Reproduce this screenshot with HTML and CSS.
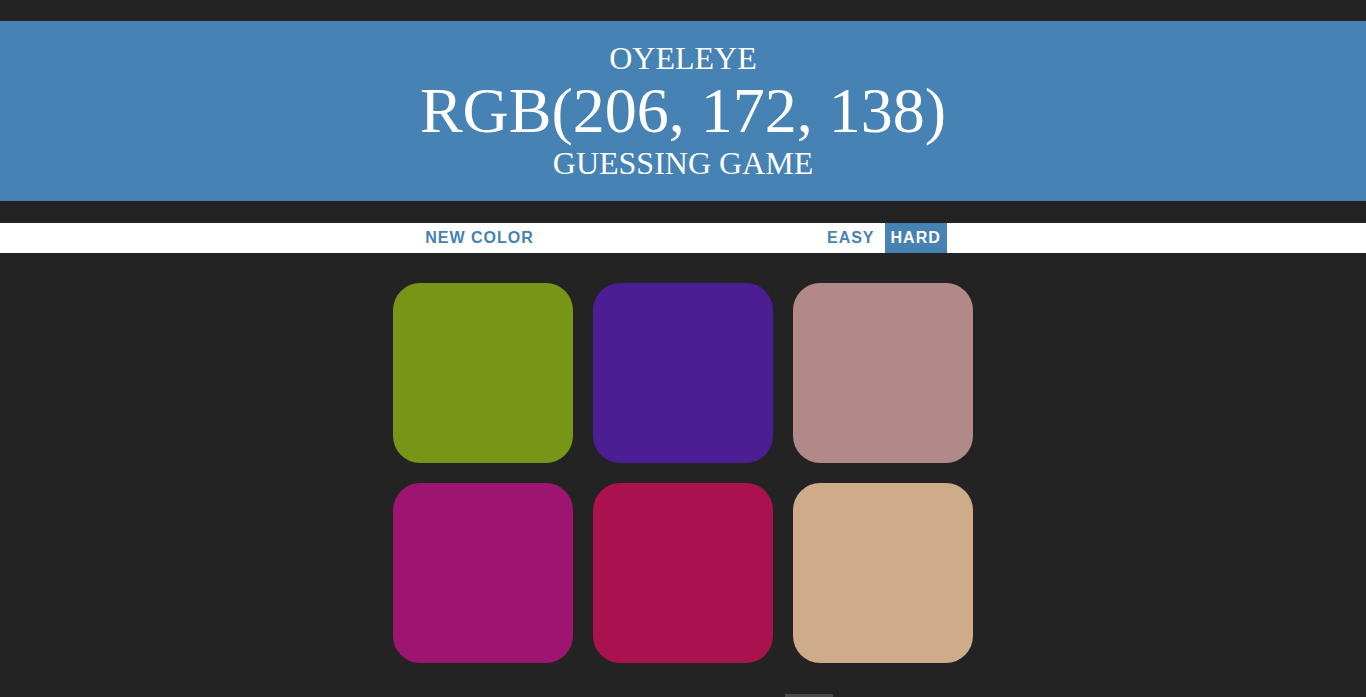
FILE: index.html
```html
<!DOCTYPE html>
<html>
<head>
<meta charset="utf-8">
<title>Colour Game</title>
<link rel="stylesheet" href="styles.css">
</head>
<body>
<h1 class="title">
  <span class="line">OYELEYE</span>
  <span class="line big">RGB(206, 172, 138)</span>
  <span class="line">GUESSING GAME</span>
</h1>
<div class="stripe">
  <button class="btn">NEW COLOR</button>
  <span class="message"></span>
  <button class="btn mode">EASY</button>
  <button class="btn mode selected">HARD</button>
</div>
<div class="container">
  <div class="square sq1"></div>
  <div class="square sq2"></div>
  <div class="square sq3"></div>
  <div class="square sq4"></div>
  <div class="square sq5"></div>
  <div class="square sq6"></div>
</div>
<div class="footer-bar"></div>
</body>
</html>
```
FILE: styles.css
```css
html, body {
  margin: 0;
  padding: 0;
}
body {
  background: #232323;
  font-family: "Liberation Sans", Arial, sans-serif;
  overflow: hidden;
}
.title {
  margin: 21px 0 22px;
  padding: 20px 0;
  background: #4682b4;
  color: #fff;
  text-align: center;
  font-family: "Liberation Serif", "Times New Roman", serif;
  font-weight: normal;
  font-size: 32px;
  line-height: 35px;
  text-transform: uppercase;
}
.line {
  display: block;
}
.big {
  font-size: 64px;
  line-height: 70px;
}
.stripe {
  background: #fff;
  height: 30px;
  display: flex;
  justify-content: center;
  align-items: stretch;
  gap: 4px;
}
.btn {
  border: none;
  background: none;
  color: #4682b4;
  font-family: "Liberation Sans", Arial, sans-serif;
  font-weight: 700;
  font-size: 16px;
  letter-spacing: 1px;
  text-transform: uppercase;
  padding: 0 6px 1px;
  margin: 0;
  height: 30px;
  line-height: 28px;
}
.btn.selected {
  background: #4682b4;
  color: #fff;
}
.message {
  width: 20%;
}
.container {
  width: 600px;
  margin: 20px auto 0;
  display: flex;
  flex-wrap: wrap;
  padding: 0;
}
.square {
  width: 180px;
  height: 180px;
  margin: 10px;
  border-radius: 27px;
}
.sq1 { background: rgb(120, 149, 24); }
.sq2 { background: rgb(75, 30, 148); }
.sq3 { background: rgb(176, 137, 136); }
.sq4 { background: rgb(157, 21, 112); }
.sq5 { background: rgb(170, 18, 77); }
.sq6 { background: rgb(206, 172, 138); }
.footer-bar {
  width: 48px;
  height: 10px;
  margin: 21px 0 0 calc(50% + 102px);
  background: #4a4a4a;
}
```
